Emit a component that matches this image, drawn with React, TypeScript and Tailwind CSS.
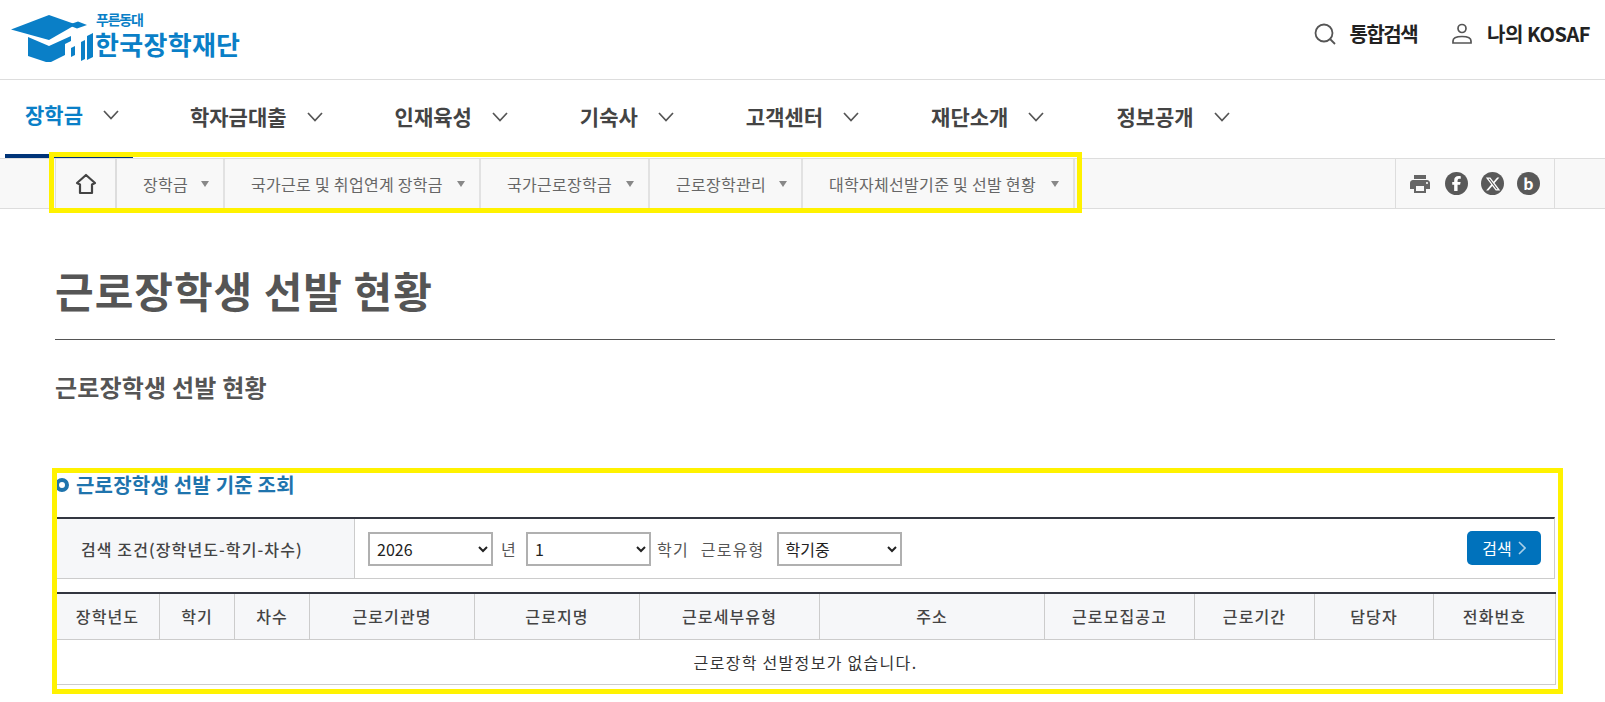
import React from 'react';
import { FaFacebookF, FaXTwitter } from 'react-icons/fa6';
import { MdPrint } from 'react-icons/md';

const FONT = "font-['Noto_Sans_CJK_KR','Noto_Sans',sans-serif]";

const navItems = ['학자금대출', '인재육성', '기숙사', '고객센터', '재단소개', '정보공개'];

const crumbs = [
  { label: '장학금', width: 'w-[108px]' },
  { label: '국가근로 및 취업연계 장학금', width: 'w-[256px]' },
  { label: '국가근로장학금', width: 'w-[169px]' },
  { label: '근로장학관리', width: 'w-[153px]' },
  { label: '대학자체선발기준 및 선발 현황', width: 'w-[272px]' },
];

const columns = [
  { label: '장학년도', width: 'w-[104px]' },
  { label: '학기', width: 'w-[75px]' },
  { label: '차수', width: 'w-[75px]' },
  { label: '근로기관명', width: 'w-[165px]' },
  { label: '근로지명', width: 'w-[165px]' },
  { label: '근로세부유형', width: 'w-[180px]' },
  { label: '주소', width: 'w-[225px]' },
  { label: '근로모집공고', width: 'w-[150px]' },
  { label: '근로기간', width: 'w-[120px]' },
  { label: '담당자', width: 'w-[119px]' },
  { label: '전화번호', width: 'w-[122px]' },
];

const NavChevron = () => (
  <svg viewBox="0 0 16 10" className="w-4 h-[10px] ml-5 shrink-0" fill="none" stroke="#555" strokeWidth="1.7">
    <path d="M1 1l7 7.500L15 1" />
  </svg>
);

const Logo = () => (
  <div className="flex items-start">
    <svg viewBox="0 0 90 48" className="w-[90px] h-[48px] mt-[14px] ml-[10px] shrink-0" fill="#0a7fc7">
      <path d="M1 15.500L39 1l27 9.500-27 15.500z" />
      <path d="M18 23l21 9 22-10v5l-6 3v11l-16 8-21-7z" />
      <path d="M58 11l10-3.500 9 3.500-10 3.500z" />
      <path d="M61 34l4-2v9l-4 2zM71 28l4-2v19l-4 2zM77 22l6-3v24l-6 3z" />
    </svg>
    <div className="flex flex-col -ml-[5px] mt-[11px] text-[#0a7fc7] font-bold">
      <span className="text-[14px] leading-[17px] tracking-[-1.2px] pl-[1px]">푸른동대</span>
      <span className="text-[26px] leading-[32px] tracking-[0.3px]">한국장학재단</span>
    </div>
  </div>
);

const Bullet = () => <span className="w-[14px] h-[14px] rounded-full border-[4px] border-[#1f74ad] shrink-0" />;

const Select = ({ value, options }: { value: string; options: string[] }) => (
  <select
    defaultValue={value}
    className="w-[125px] h-[34px] border-2 border-[#b0b0b0] bg-white pl-[3px] text-[16px] text-[#222]"
  >
    {options.map((o) => (
      <option key={o}>{o}</option>
    ))}
  </select>
);

export default function App() {
  return (
    <div className={`relative h-[702px] overflow-hidden bg-white ${FONT}`}>
      <header className="h-[80px] flex items-start justify-between border-b border-[#ddd]">
        <Logo />
        <div className="flex items-center h-[68px] pr-[15px] text-[#222] font-bold text-[20px]">
          <svg viewBox="0 0 22 22" className="w-[22px] h-[22px]" fill="none" stroke="#555" strokeWidth="1.8">
            <circle cx="10" cy="10" r="8.500" />
            <path d="M16 16l5 5" />
          </svg>
          <span className="ml-[14px] tracking-[-1.5px]">통합검색</span>
          <svg viewBox="0 0 22 22" className="w-[22px] h-[22px] ml-[34px]" fill="none" stroke="#555" strokeWidth="1.7">
            <circle cx="11" cy="5.500" r="4" />
            <path d="M2 20v-2c0-3 3-4.500 9-4.500s9 1.500 9 4.500v2z" />
          </svg>
          <span className="ml-[14px] tracking-[-0.5px]">나의 KOSAF</span>
        </div>
      </header>

      <nav className="h-[78px] flex items-stretch pl-[5px] text-[21px] font-bold text-[#444]">
        <div className="flex items-center pl-5 pr-[14px] border-b-4 border-[#003478] text-[#0a7fc7] pb-[4px]">
          장학금
          <NavChevron />
        </div>
        {navItems.map((item) => (
          <div key={item} className="flex items-center pl-[57px] pr-[15px] pb-[4px]">
            {item}
            <NavChevron />
          </div>
        ))}
      </nav>

      <div className="h-[51px] flex justify-between bg-[#f8f8f8] border-y border-[#ddd] pl-[55px] pr-[50px] text-[16px] tracking-[0.3px] text-[#666]">
        <div className="flex items-stretch border-l border-[#ddd]">
          <div className="w-[61px] flex items-center justify-center border-r-2 border-[#ddd]">
            <svg viewBox="0 0 22 22" className="w-[22px] h-[22px]" fill="none" stroke="#444" strokeWidth="2.200" strokeLinejoin="round">
              <path d="M11 2l9 8-3 1.500V20H5v-8.500L2 10z" />
            </svg>
          </div>
          {crumbs.map((c) => (
            <div key={c.label} className={`${c.width} flex items-center justify-between pl-[26px] pr-[14px] border-r-2 border-[#e2e2e2]`}>
              <span className="whitespace-nowrap">{c.label}</span>
              <span className="w-0 h-0 border-x-[4px] border-x-transparent border-t-[6px] border-t-[#888]" />
            </div>
          ))}
        </div>
        <div className="w-[160px] flex items-center gap-[13px] pl-[12px] border-x border-[#ddd]">
          <MdPrint className="w-[24px] h-[24px] text-[#666]" />
          <span className="w-[23px] h-[23px] rounded-full bg-[#595959] flex items-center justify-center text-white">
            <FaFacebookF className="w-[15px] h-[15px]" />
          </span>
          <span className="w-[23px] h-[23px] rounded-full bg-[#595959] flex items-center justify-center text-white">
            <FaXTwitter className="w-[16px] h-[16px]" />
          </span>
          <span className="w-[23px] h-[23px] rounded-full bg-[#595959] flex items-center justify-center text-white text-[16px] font-bold leading-none pb-[2px]">
            b
          </span>
        </div>
      </div>

      <main className="pl-[55px] pr-[50px]">
        <h1 className="mt-[48px] pb-[16px] border-b border-[#555] text-[42px] leading-[66px] font-bold text-[#555] tracking-[1px]">
          근로장학생 선발 현황
        </h1>
        <h2 className="mt-[30px] text-[24px] leading-[34px] font-semibold text-[#555] tracking-[0.2px]">근로장학생 선발 현황</h2>

        <div className="mt-[66px] flex items-center gap-[7px] h-[30px]">
          <Bullet />
          <h3 className="text-[20px] font-bold text-[#1f74ad] tracking-[0.2px]">근로장학생 선발 기준 조회</h3>
        </div>

        <div className="mt-[17px] h-[62px] flex border-t-2 border-[#333640] border-b border-r border-b-[#ccc] border-r-[#ccc] text-[16px] text-[#555]">
          <div className="w-[300px] flex items-center pl-[26px] bg-[#f6f7f9] border-r border-[#ccc] font-medium text-[#444] tracking-[1.1px]">
            검색 조건(장학년도-학기-차수)
          </div>
          <div className="flex-1 flex items-center pl-[13px] pr-[13px]">
            <Select value="2026" options={['2026', '2025']} />
            <span className="ml-[8px] w-[25px]">년</span>
            <Select value="1" options={['1', '2']} />
            <span className="ml-[6px] tracking-[1.2px]">학기</span>
            <span className="ml-[12px] tracking-[1.2px]">근로유형</span>
            <span className="ml-[12px]">
              <Select value="학기중" options={['학기중', '방학중']} />
            </span>
            <button className="ml-auto w-[74px] h-[34px] -mt-[1px] rounded-[5px] bg-[#0072bc] text-white flex items-center justify-center gap-[6px]">
              검색
              <svg viewBox="0 0 8 14" className="w-[8px] h-[14px]" fill="none" stroke="#a9cfe8" strokeWidth="1.600">
                <path d="M1 1l6 6-6 6" />
              </svg>
            </button>
          </div>
        </div>

        <table className="mt-[13px] w-full table-fixed border-collapse border-t-2 border-[#333640] text-[16px]">
          <colgroup>
            {columns.map((c) => (
              <col key={c.label} className={c.width} />
            ))}
          </colgroup>
          <thead>
            <tr className="h-[46px] bg-[#f6f7f9]">
              {columns.map((c) => (
                <th key={c.label} className="border border-[#ccc] border-t-0 font-medium text-[#444] tracking-[1.1px]">
                  {c.label}
                </th>
              ))}
            </tr>
          </thead>
          <tbody>
            <tr className="h-[45px]">
              <td colSpan={11} className="border border-[#ccc] text-center text-[#333] tracking-[1.3px]">
                근로장학 선발정보가 없습니다.
              </td>
            </tr>
          </tbody>
        </table>
      </main>

      {/* yellow annotation frames over the page */}
      <div className="absolute left-[49px] top-[152px] w-[1033px] h-[61px] border-[5px] border-[#fff200] pointer-events-none" />
      <div className="absolute left-[52px] top-[468px] w-[1511px] h-[226px] border-[5px] border-[#fff200] pointer-events-none" />
    </div>
  );
}
